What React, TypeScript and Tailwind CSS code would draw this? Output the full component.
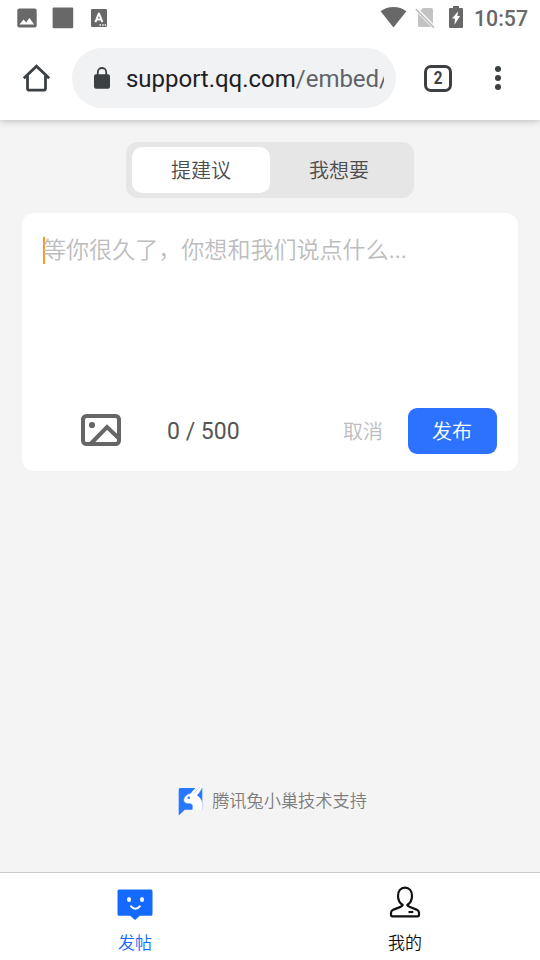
import React, { useState } from 'react'

interface TabItemProps {
  label: string
  icon: React.ReactNode
  active?: boolean
}

const StatusBar: React.FC = () => (
  <div className="relative z-20 h-9 flex items-center justify-between bg-white text-[#686868]">
    <div className="flex items-center">
      <svg className="ml-[17px] w-5 h-5" viewBox="0 0 20 20">
        <rect x="0.3" y="0.4" width="19.4" height="19.2" rx="2" fill="currentColor" />
        <path d="M2.5 16.5L6.6 11.6L9.2 14.4L12.4 10L17.2 16.5Z" fill="#fff" />
      </svg>
      <svg className="ml-[15px] w-[22px] h-[22px]" viewBox="0 0 22 22">
        <rect x="0.6" y="0.6" width="20.6" height="20.6" rx="1" fill="currentColor" />
      </svg>
      <svg className="ml-[17px] w-4 h-[18px]" viewBox="0 0 16 18">
        <rect width="16" height="18" rx="1.2" fill="currentColor" />
        <path d="M4.4 13.2L7.7 4.8H8.1L11.4 13.2M5.8 10.5H10" fill="none" stroke="#fff" strokeWidth="1.9" />
        <path d="M8.5 16H10M11.2 16H12.7M13.7 16H15" stroke="#fff" strokeWidth="1.3" />
      </svg>
    </div>

    <div className="flex items-center">
      <svg className="w-[27px] h-[22px]" viewBox="0 0 27 22">
        <path d="M0.6 4.2C4.2 1.5 8.6 0 13.5 0S22.8 1.5 26.4 4.2L13.5 20.4Z" fill="currentColor" />
      </svg>
      <svg className="ml-2 w-5 h-[22px]" viewBox="0 0 20 22">
        <path d="M8 1H16.2Q18 1 18 2.8V18L4.7 4.4Z" fill="#c3c3c3" />
        <path d="M3 6.5L16.5 20H4.8Q3 20 3 18.2Z" fill="#c3c3c3" />
        <path d="M1.6 1L19.6 19.4" stroke="#fff" strokeWidth="1.6" />
        <path d="M0.8 2.2L19 20.6" stroke="#c0c0c0" strokeWidth="1.7" />
      </svg>
      <svg className="-mt-[2px] ml-[14px] w-[14px] h-[22px]" viewBox="0 0 14 22">
        <path d="M4 0H10V2H13Q14 2 14 3V21Q14 22 13 22H1Q0 22 0 21V3Q0 2 1 2H4Z" fill="currentColor" />
        <path d="M9 5.6L8.4 10H11L5.5 18.8L6 12.6H3Z" fill="#fff" />
      </svg>
      <span className="ml-[11px] mr-3 mt-[2px] w-[54px] whitespace-nowrap text-[21.3px] leading-6 font-medium">10:57</span>
    </div>
  </div>
)

const BrowserBar: React.FC = () => (
  <div className="relative z-10 h-[84px] flex items-center bg-white text-[#3c4043] shadow-[0_1px_7px_rgba(0,0,0,0.24)]">
    <svg className="ml-[22px] w-[29px] h-7" viewBox="0 0 29 28" fill="none" stroke="currentColor" strokeWidth="2.8">
      <path d="M1.8 14.2L14.5 2.2L27.2 14.2" />
      <path d="M5.5 11.5V24.2Q5.5 26.2 7.5 26.2H21.5Q23.5 26.2 23.5 24.2V11.5" />
    </svg>
    <div className="ml-[21px] w-[324px] h-[60px] rounded-full bg-[#f1f2f4] flex items-center">
      <svg className="ml-[22px] w-4 h-[22px] shrink-0" viewBox="0 0 16 22">
        <rect y="7.3" width="16" height="14.5" rx="2" fill="currentColor" />
        <path d="M3.8 8V5.2A4.2 4.2 0 0 1 12.2 5.2V8" fill="none" stroke="currentColor" strokeWidth="1.8" />
      </svg>
      <div className="ml-4 mt-[2px] w-[258px] overflow-hidden whitespace-nowrap text-[24px] leading-8 tracking-[-0.02px] text-[#202124]">
        support.qq.com<span className="text-[#5f6368]">/embed/</span>
      </div>
    </div>
    <div className="ml-7 w-7 h-[27px] rounded-[7px] border-[3px] border-[#3c4043] flex items-center justify-center text-[18px] leading-none font-bold">
      <span className="scale-x-85">2</span>
    </div>
    <svg className="ml-[42px] w-2 h-6" viewBox="0 0 8 24" fill="currentColor">
      <circle cx="4" cy="3" r="3" />
      <circle cx="4" cy="12" r="3" />
      <circle cx="4" cy="21" r="3" />
    </svg>
  </div>
)

const PictureIcon: React.FC = () => (
  <svg className="w-10 h-8" viewBox="0 0 40 32" fill="none" stroke="#666" strokeWidth="4">
    <rect x="2" y="2" width="36" height="28" rx="3.5" />
    <path d="M10 29.5L26 13L38 24.5" />
    <circle cx="11" cy="11" r="3.1" fill="#666" stroke="none" />
  </svg>
)

const RabbitLogo: React.FC = () => (
  <svg className="w-[26px] h-[34px]" viewBox="0 0 26 34">
    <path d="M2.2 6H24.3V27.8H6.8L0.7 33.6V7.5Q0.7 6 2.2 6Z" fill="#2878ff" />
    <path
      d="M24.8 0.2C20 3.2 15.6 7.4 12.8 11.6C9.2 12.4 6.5 14.5 6 17.5C5.6 20.3 8 21.6 11.2 21.3C13.9 21.5 15 22.8 14.8 24.8L14.6 28.2H24.2V21.4C24 17.7 21.5 15.2 18.8 13.3C21.8 10.4 24.6 6.5 24.8 0.2Z"
      fill="#fff"
      stroke="#d3e3ff"
      strokeWidth="0.4"
    />
    <path d="M22 5C19.5 7 17.8 9 16 11.4" stroke="#9fc2ff" strokeWidth="0.8" fill="none" />
    <circle cx="10.8" cy="15.8" r="1.2" fill="#2878ff" />
  </svg>
)

const PostIcon: React.FC = () => (
  <svg className="w-9 h-8" viewBox="0 0 36 32">
    <path d="M2 0.5H34Q35.5 0.5 35.5 2V25.2Q35.5 26.7 34 26.7H22.8L18 31L13.2 26.7H2Q0.5 26.7 0.5 25.2V2Q0.5 0.5 2 0.5Z" fill="#146aff" />
    <ellipse cx="12" cy="10.5" rx="2" ry="2.6" fill="#fff" />
    <ellipse cx="25" cy="10.5" rx="2" ry="2.6" fill="#fff" />
    <path d="M14 17.3Q18.4 22.2 22.8 17.3" fill="none" stroke="#fff" strokeWidth="2" strokeLinecap="round" />
  </svg>
)

const MineIcon: React.FC = () => (
  <svg className="-mt-[3px] mb-[3px] w-8 h-8" viewBox="0 0 32 32" fill="none" stroke="#111" strokeWidth="2.2" strokeLinejoin="round">
    <path d="M13.7 19C10.5 16.8 9 13.8 9 9.9C9 5 11.7 1.6 16 1.6S23 5 23 9.9C23 13.8 21.5 16.8 18.3 19C18.5 20 19.5 20.5 21 21.1L27.5 23.6Q30 24.8 30 26.8V28.8Q30 30.3 28.5 30.3H3.5Q2 30.3 2 28.8V26.8Q2 24.8 4.5 23.6L11 21.1C12.5 20.5 13.5 20 13.7 19Z" />
    <path d="M19.5 26H24.3" />
  </svg>
)

const TabItem: React.FC<TabItemProps> = ({ label, icon, active = false }) => (
  <button className={`flex-1 flex flex-col items-center ${active ? 'text-[#146aff]' : 'text-[#111]'}`}>
    {icon}
    <span className="mt-[10px] text-[17px] leading-6">{label}</span>
  </button>
)

const App: React.FC = () => {
  const [mode, setMode] = useState('提建议')
  const modes = ['提建议', '我想要']

  return (
    <div className="w-[540px] h-[960px] overflow-hidden flex flex-col bg-[#f4f4f4] font-['Roboto','Noto_Sans_CJK_SC',sans-serif]">
      <StatusBar />
      <BrowserBar />

      <main className="flex-1 flex flex-col items-center font-[350]">
        {/* Post type switch */}
        <div className="mt-[22px] w-72 h-14 rounded-xl bg-[#e6e6e6] px-1.5 py-[5px] flex">
          {modes.map((item) => (
            <button
              key={item}
              onClick={() => setMode(item)}
              className={`w-[138px] h-[46px] pt-[1px] rounded-[10px] text-[20px] text-[#4c4c4c] ${mode === item ? 'bg-white' : ''}`}
            >
              {item}
            </button>
          ))}
        </div>

        {/* Editor */}
        <div className="mt-[15px] w-[496px] h-[258px] rounded-xl bg-white flex flex-col justify-between">
          <div className="pt-6 pl-[21px] flex">
            <div className="w-[2px] h-[27px] bg-[#ff9628]" />
            <p className="-ml-[2px] text-[23.05px] leading-[27px] text-[#bdbdbd]">
              等你很久了，你想和我们说点什么<span className="font-normal">...</span>
            </p>
          </div>
          <div className="h-[46px] mb-[17px] flex items-center">
            <button className="ml-[59px] -mt-[2px]">
              <PictureIcon />
            </button>
            <span className="ml-[46px] mt-[2px] w-[176px] text-[23px] font-normal text-[#555]">0 / 500</span>
            <button className="pt-[2px] text-[20px] text-[#bdbdbd]">取消</button>
            <button className="ml-[25px] w-[89px] h-[46px] pt-[2px] pr-[1px] rounded-[9px] bg-[#2d72ff] text-[20px] text-white">发布</button>
          </div>
        </div>

        <div className="mt-auto mb-[56px] ml-[5px] h-[34px] flex items-center">
          <RabbitLogo />
          <span className="ml-2 mt-[5px] text-[17.2px] text-[#7c7c7c]">腾讯兔小巢技术支持</span>
        </div>
      </main>

      <nav className="h-[88px] bg-white border-t border-[#c9c9c9] pt-4 flex font-[350]">
        <TabItem label="发帖" icon={<PostIcon />} active />
        <TabItem label="我的" icon={<MineIcon />} />
      </nav>
    </div>
  )
}

export default App
